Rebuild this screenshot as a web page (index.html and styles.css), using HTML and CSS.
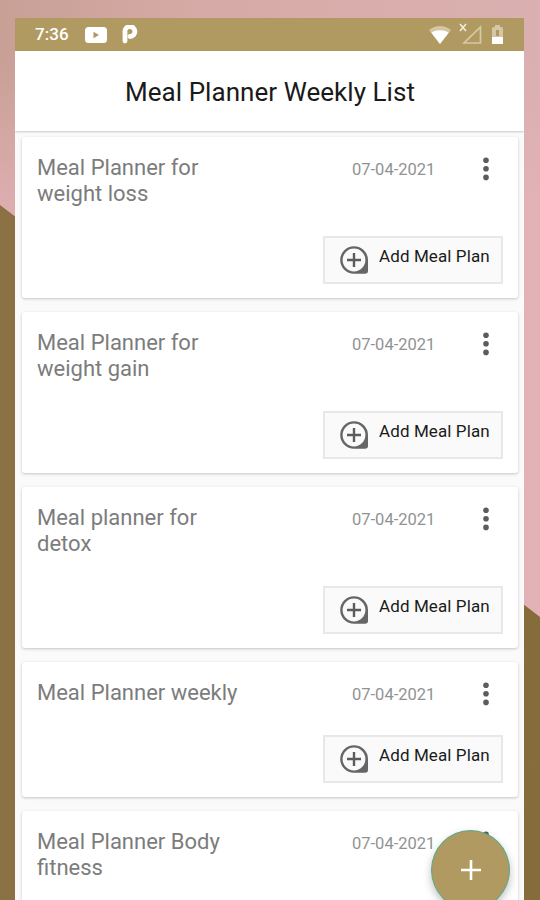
FILE: index.html
```html
<!DOCTYPE html>
<html lang="en">
<head>
    <meta charset="UTF-8">
    <meta name="viewport" content="width=device-width, initial-scale=1.0">
    <title>Meal Planner</title>
    <link rel="stylesheet" href="styles.css">
</head>
<body>
    <svg class="symbols" width="0" height="0">
        <symbol id="add-icon" viewBox="0 0 30 30">
            <path d="M15 1.2A13.8 13.8 0 1 0 15 28.800H26Q29 28.800 29 26V15A14 13.8 0 0 0 15 1.2Z" fill="#666"/>
            <circle cx="15" cy="15" r="11.4" fill="#fafafa"/>
            <path d="M15 8v14M8 15h14" stroke="#5c5c5c" stroke-width="2.4"/>
        </symbol>
    </svg>

    <div class="phone">
        <div class="status-bar">
            <span class="time">7:36</span>
            <svg class="youtube" width="22" height="16" viewBox="0 0 22 16">
                <rect width="22" height="16" rx="3.5" fill="#fff"/>
                <path d="M8.5 4.8v6.4L14 8z" fill="#b09a62"/>
            </svg>
            <svg class="parking" width="16" height="19" viewBox="0 0 16 19">
                <path d="M3 16V7.5A5 5 0 1 1 8 11.5" fill="none" stroke="#fff" stroke-width="4.8" stroke-linecap="round"/>
            </svg>
            <svg class="wifi" width="22" height="18" viewBox="0 0 22 18">
                <path d="M0 4Q11-4 22 4L11 18Z" fill="#d5c7a5"/>
                <path d="M2.2 6.5Q11 2 19.8 6.5L11 18Z" fill="#fff"/>
            </svg>
            <svg class="signal" width="24" height="22" viewBox="0 0 24 22">
                <path d="M21.5 4v16H5z" fill="none" stroke="#d8c9a4" stroke-width="1.7"/>
                <path d="M1 1l6 7M7 1l-6 7" stroke="#f4eedf" stroke-width="1.5"/>
            </svg>
            <svg class="battery" width="11" height="19" viewBox="0 0 11 19">
                <path d="M3 0h5v2h1.5Q11 2 11 4v8H0V4Q0 2 1.5 2H3z" fill="#d5c7a5"/>
                <path d="M4 5h3v6H4z" fill="#b09a62"/>
                <path d="M0 12h11v7H0z" fill="#fff"/>
            </svg>
        </div>

        <header>
            <h1>Meal Planner Weekly List</h1>
        </header>

        <main id="plans"></main>
    </div>

    <button class="fab" aria-label="Add">
        <svg width="20" height="20" viewBox="0 0 20 20">
            <path d="M10 0v20M0 10h20" stroke="#fff" stroke-width="2.6"/>
        </svg>
    </button>

    <script>
        const plans = [
            { name: 'Meal Planner for weight loss', date: '07-04-2021' },
            { name: 'Meal Planner for weight gain', date: '07-04-2021' },
            { name: 'Meal planner for detox', date: '07-04-2021' },
            { name: 'Meal Planner weekly', date: '07-04-2021' },
            { name: 'Meal Planner Body fitness', date: '07-04-2021' }
        ];

        document.getElementById('plans').innerHTML = plans.map(plan => `
            <section class="card">
                <div class="card-top">
                    <h2>${plan.name}</h2>
                    <span class="date">${plan.date}</span>
                    <svg class="more" width="6" height="24" viewBox="0 0 6 24">
                        <circle cx="3" cy="3.2" r="2.8"/>
                        <circle cx="3" cy="11.8" r="2.8"/>
                        <circle cx="3" cy="20.4" r="2.8"/>
                    </svg>
                </div>
                <button class="add">
                    <svg width="30" height="30"><use href="#add-icon"/></svg>
                    <span>Add Meal Plan</span>
                </button>
            </section>
        `).join('');
    </script>
</body>
</html>
```

FILE: styles.css
```css
* {
    box-sizing: border-box;
}
body {
    margin: 0;
    height: 900px;
    padding: 18px 16px 0 15px;
    overflow: hidden;
    position: relative;
    font-family: Roboto, sans-serif;
    background:
        linear-gradient(rgba(228, 178, 184, 0) 60px, rgba(228, 178, 184, 0.8) 220px),
        linear-gradient(90deg, #c8a096 0, #d6aaa6 200px, #dab0b0 540px);
}
body::before {
    content: "";
    position: absolute;
    inset: 0;
    background: linear-gradient(90deg, #8b7143, #866b3b);
    clip-path: polygon(0 205px, 100% 617px, 100% 100%, 0 100%);
}
.symbols {
    position: absolute;
}
.phone {
    position: relative;
    height: 882px;
    overflow: hidden;
    background: #fafafa;
}
.status-bar {
    display: flex;
    align-items: center;
    height: 33px;
    padding: 0 21px 0 20px;
    background: #b09a62;
}
.time {
    width: 50px;
    color: #fff;
    font-size: 17px;
    font-weight: 500;
    line-height: 33px;
    letter-spacing: 0.1px;
}
.parking {
    margin-left: 15px;
}
.wifi {
    margin-left: auto;
}
.signal {
    margin: 0 9px 2px 8px;
}
header {
    height: 80px;
    background: #fff;
    box-shadow: 0 1px 2px rgba(0, 0, 0, 0.2);
}
h1 {
    margin: 0;
    padding-left: 1px;
    text-align: center;
    font-size: 26px;
    font-weight: 400;
    line-height: 82px;
    letter-spacing: 0.05px;
    color: #1a1a1a;
}
main {
    display: flex;
    flex-direction: column;
    gap: 14px;
    padding: 6px 6px 0 7px;
}
.card {
    display: flex;
    flex-direction: column;
    flex-shrink: 0;
    padding: 18px 15px 14px;
    border-radius: 3px;
    background: #fff;
    box-shadow: 0 1px 3px rgba(0, 0, 0, 0.22);
}
.card-top {
    display: flex;
    align-items: flex-start;
}
h2 {
    width: 210px;
    margin: 0;
    padding-right: 5px;
    font-size: 22px;
    font-weight: 400;
    line-height: 26px;
    color: #7c7c7c;
}
.date {
    width: 84px;
    margin: 3px 0 0 105px;
    font-size: 16.5px;
    line-height: 23px;
    white-space: nowrap;
    color: #929292;
}
.more {
    margin: 2px 14px 0 auto;
    fill: #5c5c5c;
}
.add {
    display: flex;
    align-items: center;
    align-self: flex-end;
    width: 180px;
    height: 48px;
    margin-top: 29px;
    padding: 0 0 0 14px;
    border: 2px solid #e8e8e8;
    background: #fafafa;
    font-family: inherit;
    font-size: 17px;
    letter-spacing: 0.1px;
    color: #1a1a1a;
    white-space: nowrap;
}
.add span {
    margin: 0 0 8px 10px;
}
.fab {
    position: absolute;
    left: 431px;
    top: 830px;
    display: flex;
    align-items: center;
    justify-content: center;
    width: 79px;
    height: 80px;
    padding: 0;
    border: 1px solid #5aa88a;
    border-radius: 50%;
    background: #b09a62;
    box-shadow: 0 4px 8px rgba(0, 0, 0, 0.25);
}
```
